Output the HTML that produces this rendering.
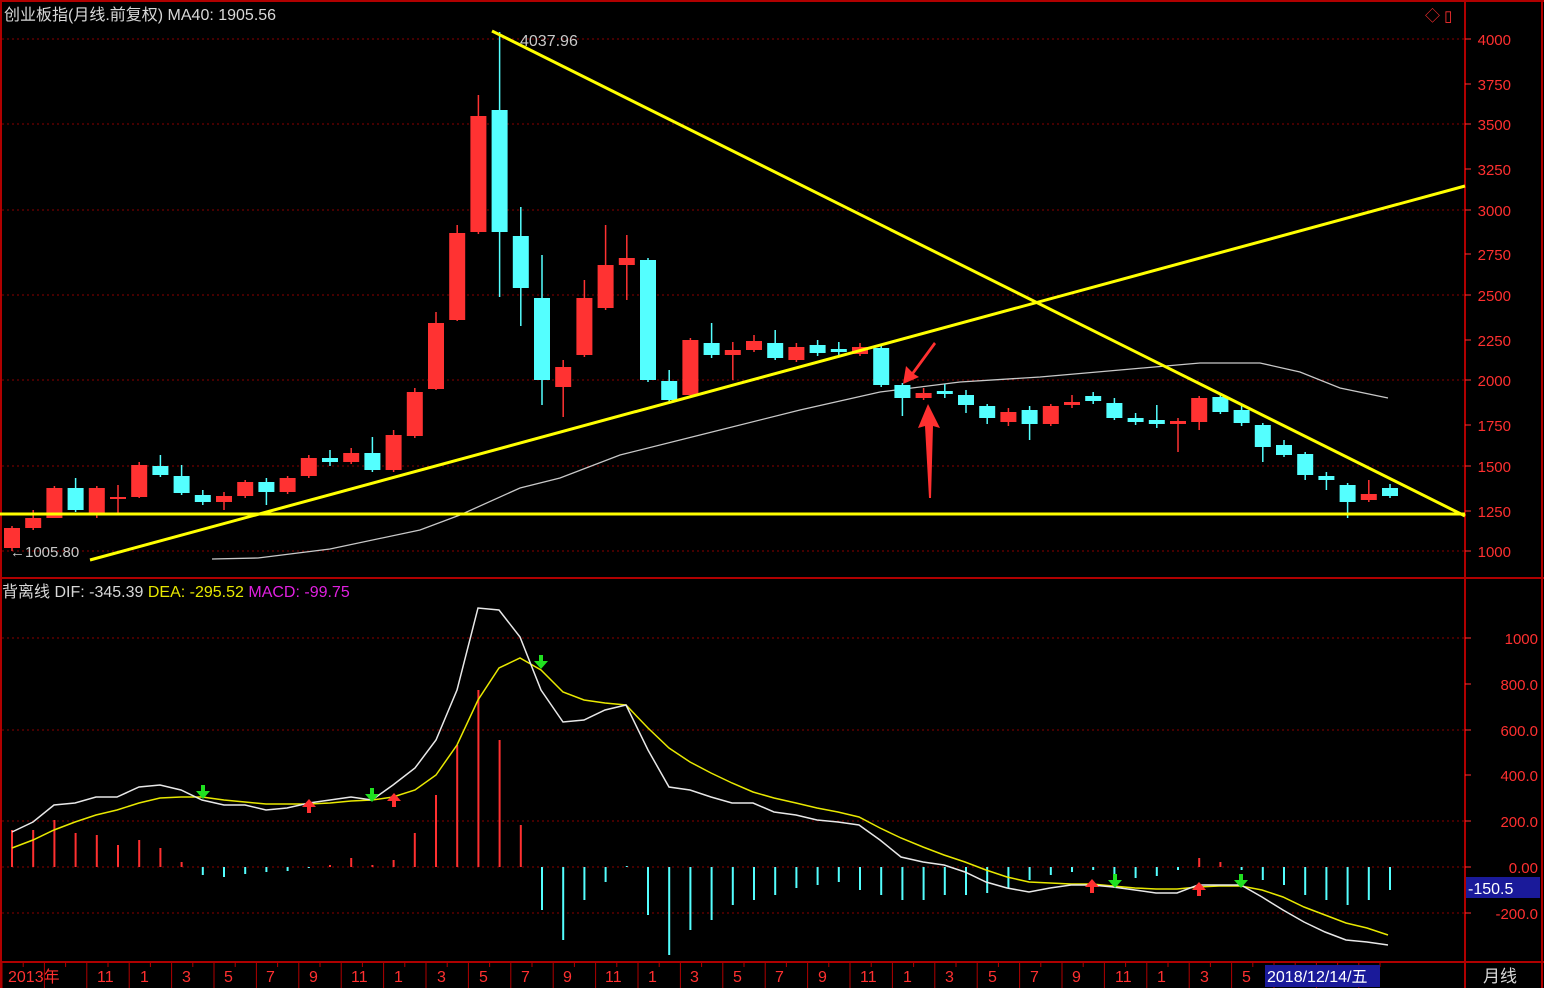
<!DOCTYPE html>
<html><head><meta charset="utf-8"><style>
html,body{margin:0;padding:0;background:#000;overflow:hidden}
svg{display:block}
text{font-family:"Liberation Sans","Noto Sans CJK SC",sans-serif}
</style></head><body>
<svg id="s" width="1544" height="988" viewBox="0 0 1544 988" xmlns="http://www.w3.org/2000/svg">
<rect width="1544" height="988" fill="#000"/>
<!-- frame -->
<g stroke="#b00000" stroke-width="2" fill="none">
<line x1="0" y1="1" x2="1544" y2="1"/>
<line x1="1465" y1="0" x2="1465" y2="988"/>
<line x1="0" y1="578" x2="1544" y2="578"/>
<line x1="0" y1="962" x2="1544" y2="962"/>
<line x1="1" y1="0" x2="1" y2="988"/>
<line x1="1542" y1="0" x2="1542" y2="988"/>
</g>
<g stroke="#8a0000" stroke-width="1" stroke-dasharray="2,3">
<line x1="2" y1="39" x2="1465" y2="39"/><line x1="2" y1="124" x2="1465" y2="124"/>
<line x1="2" y1="210" x2="1465" y2="210"/><line x1="2" y1="295" x2="1465" y2="295"/>
<line x1="2" y1="380" x2="1465" y2="380"/><line x1="2" y1="466" x2="1465" y2="466"/>
<line x1="2" y1="551" x2="1465" y2="551"/>
<line x1="2" y1="638" x2="1465" y2="638"/><line x1="2" y1="730" x2="1465" y2="730"/>
<line x1="2" y1="821" x2="1465" y2="821"/><line x1="2" y1="867" x2="1465" y2="867"/>
<line x1="2" y1="913" x2="1465" y2="913"/>
</g>
<g id="main"></g>
<!-- right axis -->
<g fill="#ff3030" font-size="15" text-anchor="end">
<text x="1511" y="45">4000</text><text x="1511" y="90">3750</text><text x="1511" y="130">3500</text>
<text x="1511" y="175">3250</text><text x="1511" y="216">3000</text><text x="1511" y="260">2750</text>
<text x="1511" y="301">2500</text><text x="1511" y="346">2250</text><text x="1511" y="386">2000</text>
<text x="1511" y="431">1750</text><text x="1511" y="472">1500</text><text x="1511" y="517">1250</text>
<text x="1511" y="557">1000</text>
<text x="1538" y="644">1000</text><text x="1538" y="690">800.0</text><text x="1538" y="736">600.0</text>
<text x="1538" y="781">400.0</text><text x="1538" y="827">200.0</text><text x="1538" y="873">0.00</text>
<text x="1538" y="919">-200.0</text>
</g>
<g stroke="#ff3030" stroke-width="1">
<line x1="1465" y1="39" x2="1471" y2="39"/><line x1="1465" y1="84" x2="1471" y2="84"/><line x1="1465" y1="124" x2="1471" y2="124"/><line x1="1465" y1="169" x2="1471" y2="169"/><line x1="1465" y1="210" x2="1471" y2="210"/><line x1="1465" y1="254" x2="1471" y2="254"/><line x1="1465" y1="295" x2="1471" y2="295"/><line x1="1465" y1="340" x2="1471" y2="340"/><line x1="1465" y1="380" x2="1471" y2="380"/><line x1="1465" y1="425" x2="1471" y2="425"/><line x1="1465" y1="466" x2="1471" y2="466"/><line x1="1465" y1="511" x2="1471" y2="511"/><line x1="1465" y1="551" x2="1471" y2="551"/>
<line x1="1465" y1="638" x2="1471" y2="638"/><line x1="1465" y1="684" x2="1471" y2="684"/><line x1="1465" y1="730" x2="1471" y2="730"/><line x1="1465" y1="775" x2="1471" y2="775"/><line x1="1465" y1="821" x2="1471" y2="821"/><line x1="1465" y1="867" x2="1471" y2="867"/><line x1="1465" y1="913" x2="1471" y2="913"/>
</g>
<rect x="1466" y="877" width="74" height="21" fill="#1a1a9a"/>
<text x="1468" y="894" fill="#fff" font-size="16">-150.5</text>
<!-- headers -->
<text x="4" y="20" fill="#d8d8d8" font-size="16">创业板指(月线.前复权) MA40: 1905.56</text>
<text x="1425" y="21" fill="#ff3030" font-size="15">◇ ▯</text>
<text x="2" y="597" fill="#d8d8d8" font-size="16">背离线 <tspan>DIF: -345.39</tspan> <tspan fill="#e8e800">DEA: -295.52</tspan> <tspan fill="#e020e0">MACD: -99.75</tspan></text>
<text x="520" y="46" fill="#c8c8c8" font-size="16">4037.96</text>
<text x="10" y="557" fill="#c8c8c8" font-size="15">←1005.80</text>
<!-- bottom axis -->
<g fill="#ff3030" font-size="16">
<text x="8" y="982">2013年</text><text x="97" y="982">11</text><text x="140" y="982">1</text><text x="182" y="982">3</text>
<text x="224" y="982">5</text><text x="266" y="982">7</text><text x="309" y="982">9</text><text x="351" y="982">11</text>
<text x="394" y="982">1</text><text x="437" y="982">3</text><text x="479" y="982">5</text><text x="521" y="982">7</text>
<text x="563" y="982">9</text><text x="605" y="982">11</text><text x="648" y="982">1</text><text x="690" y="982">3</text>
<text x="733" y="982">5</text><text x="775" y="982">7</text><text x="818" y="982">9</text><text x="860" y="982">11</text>
<text x="903" y="982">1</text><text x="945" y="982">3</text><text x="988" y="982">5</text><text x="1030" y="982">7</text>
<text x="1072" y="982">9</text><text x="1115" y="982">11</text><text x="1157" y="982">1</text><text x="1200" y="982">3</text>
<text x="1242" y="982">5</text>
</g>
<g id="ticks" stroke="#b00000"></g>
<rect x="1265" y="965" width="115" height="22" fill="#1a1a9a"/>
<text x="1267" y="982" fill="#fff" font-size="16">2018/12/14/五</text>
<text x="1483" y="982" fill="#d8d8d8" font-size="17">月线</text>
</svg>
<script>
var NS="http://www.w3.org/2000/svg",g=document.getElementById("main");
function el(t,a){var e=document.createElementNS(NS,t);for(var k in a)e.setAttribute(k,a[k]);g.appendChild(e);return e;}
var C=[["r",528,548,526,551],["r",518,528,510,530],["r",488,518,486,518],["c",488,510,478,512],["r",488,515,486,518],["r",497,499,485,515],
["r",465,497,462,498],["c",466,475,455,477],["c",476,493,465,495],["c",495,502,490,505],["r",496,502,492,510],["r",482,496,480,498],
["c",482,492,478,505],["r",478,492,476,494],["r",458,476,455,478],["c",458,462,450,466],["r",453,462,448,464],["c",453,470,437,472],
["r",435,470,430,472],["r",392,436,388,438],["r",323,389,312,390],["r",233,320,225,321],["r",116,232,95,234],["c",110,232,32,297],
["c",236,288,207,326],["c",298,380,255,405],["r",367,387,360,417],["r",298,355,280,357],["r",265,308,225,310],["r",258,265,235,300],
["c",260,380,258,382],["c",381,400,370,402],["r",340,395,338,397],["c",343,355,323,358],["r",350,355,342,380],["r",341,350,335,352],
["c",343,358,330,360],["r",347,360,343,362],["c",345,353,340,356],["c",349,352,342,357],["r",347,354,343,356],["c",348,385,345,387],
["c",385,398,383,416],["r",393,398,388,400],["c",391,394,384,398],["c",395,405,390,413],["c",406,418,404,424],["r",412,422,408,426],
["c",410,424,406,440],["r",406,424,404,426],["r",402,405,395,408],["c",396,401,392,404],["c",403,418,398,420],["c",418,422,413,425],
["c",420,424,405,428],["r",421,424,418,452],["r",398,422,396,430],["c",397,412,394,414],["c",410,423,405,426],["c",425,447,423,462],
["c",445,455,440,457],["c",454,475,452,480],["c",476,480,472,490],["c",485,502,483,518],["r",494,500,480,502],["c",488,496,484,498]];
var X=function(i){return 12+i*21.2;};
var M=[[830,1],[830,1],[820,1],[833,1],[835,1],[845,1],[840,1],[848,1],[862,1],[875,0],[877,0],[874,0],[872,0],[871,0],[868,0],[865,1],[858,1],[865,1],
[860,1],[833,1],[795,1],[745,1],[690,1],[740,1],[825,1],[910,0],[940,0],[900,0],[882,0],[866,0],[915,0],[955,0],[930,0],[920,0],[905,0],[900,0],
[895,0],[888,0],[885,0],[882,0],[890,0],[895,0],[900,0],[900,0],[895,0],[895,0],[893,0],[888,0],[880,0],[875,0],[872,0],[870,0],[875,0],[878,0],
[876,0],[870,0],[858,1],[862,1],[870,0],[880,0],[885,0],[895,0],[900,0],[905,0],[900,0],[890,0]];
M.forEach(function(m,i){var x=X(i);el("line",{x1:x,y1:867,x2:x,y2:m[0],stroke:m[1]?"#ff3030":"#54ffff","stroke-width":2});});
// MA40
el("polyline",{points:"212,559 258,558 330,549 420,530 460,515 520,488 560,478 620,455 700,435 800,410 880,392 960,382 1040,377 1120,370 1200,363 1260,363 1300,372 1340,388 1388,398",fill:"none",stroke:"#c8c8c8","stroke-width":1.3});
C.forEach(function(c,i){var x=X(i),col=c[0]=="r"?"#ff3232":"#54ffff";
el("line",{x1:x,y1:c[3],x2:x,y2:c[4],stroke:col,"stroke-width":1.5});
el("rect",{x:x-8,y:c[1],width:16,height:Math.max(2,c[2]-c[1]),fill:col});});
// yellow trend lines
el("line",{x1:0,y1:514,x2:1465,y2:514,stroke:"#ffff00","stroke-width":3});
el("line",{x1:90,y1:560,x2:1465,y2:186,stroke:"#ffff00","stroke-width":3});
el("line",{x1:492,y1:31,x2:1465,y2:516,stroke:"#ffff00","stroke-width":3});
// red annotation arrows
el("path",{d:"M934,342 L912,372 L906,366 L903,384 L919,377 L914,374 L936,344Z",fill:"#ff3030"});
el("path",{d:"M928,404 L918,428 L925,426 L929,498 L931,498 L933,426 L940,428Z",fill:"#ff3030"});
// MACD lines
var dif="12,832 33,822 54,805 75,803 96,797 117,797 139,787 160,785 181,790 202,800 224,805 245,805 266,810 287,808 309,803 330,800 351,797 372,800 393,785 415,768 436,740 457,690 478,608 499,610 520,637 541,690 563,722 584,720 605,710 626,705 648,750 669,787 690,790 711,797 732,803 753,803 774,812 796,815 817,820 838,822 859,825 880,840 901,857 923,862 944,865 965,872 986,882 1007,888 1029,892 1050,888 1071,885 1092,885 1113,887 1135,890 1156,893 1177,893 1198,885 1219,885 1241,885 1262,897 1283,910 1304,922 1325,932 1346,940 1367,942 1388,945";
var dea="12,848 33,840 54,830 75,822 96,815 117,810 139,803 160,798 181,797 202,797 224,800 245,802 266,804 287,804 309,804 330,803 351,801 372,800 393,797 415,790 436,775 457,745 478,700 499,668 520,658 541,670 563,692 584,700 605,703 626,705 648,728 669,748 690,762 711,773 732,783 753,792 774,798 796,803 817,808 838,812 859,817 880,828 901,838 923,847 944,855 965,862 986,870 1007,877 1029,882 1050,883 1071,884 1092,884 1113,886 1135,888 1156,889 1177,889 1198,887 1219,886 1241,886 1262,890 1283,897 1304,907 1325,915 1346,923 1367,928 1388,935";
el("polyline",{points:dea,fill:"none",stroke:"#e8e800","stroke-width":1.5});
el("polyline",{points:dif,fill:"none",stroke:"#e8e8e8","stroke-width":1.5});
function dn(x,y){el("path",{d:"M"+(x-2)+","+(y-12)+" h4 v6 h5 l-7,8 l-7,-8 h5z",fill:"#20e020"});}
function up(x,y){el("path",{d:"M"+(x-2)+","+(y+12)+" h4 v-6 h5 l-7,-8 l-7,8 h5z",fill:"#ff3030"});}
dn(203,797);dn(372,800);dn(541,667);dn(1115,886);dn(1241,886);
up(309,801);up(394,795);up(1092,881);up(1199,884);
// bottom ticks
var t=document.getElementById("ticks");
for(var i=0;i<66;i++){var x=X(i)-10,l=document.createElementNS(NS,"line");l.setAttribute("x1",x);l.setAttribute("x2",x);l.setAttribute("y1",962);l.setAttribute("y2",(i%2==0)?988:967);t.appendChild(l);}
</script>
</body></html>
